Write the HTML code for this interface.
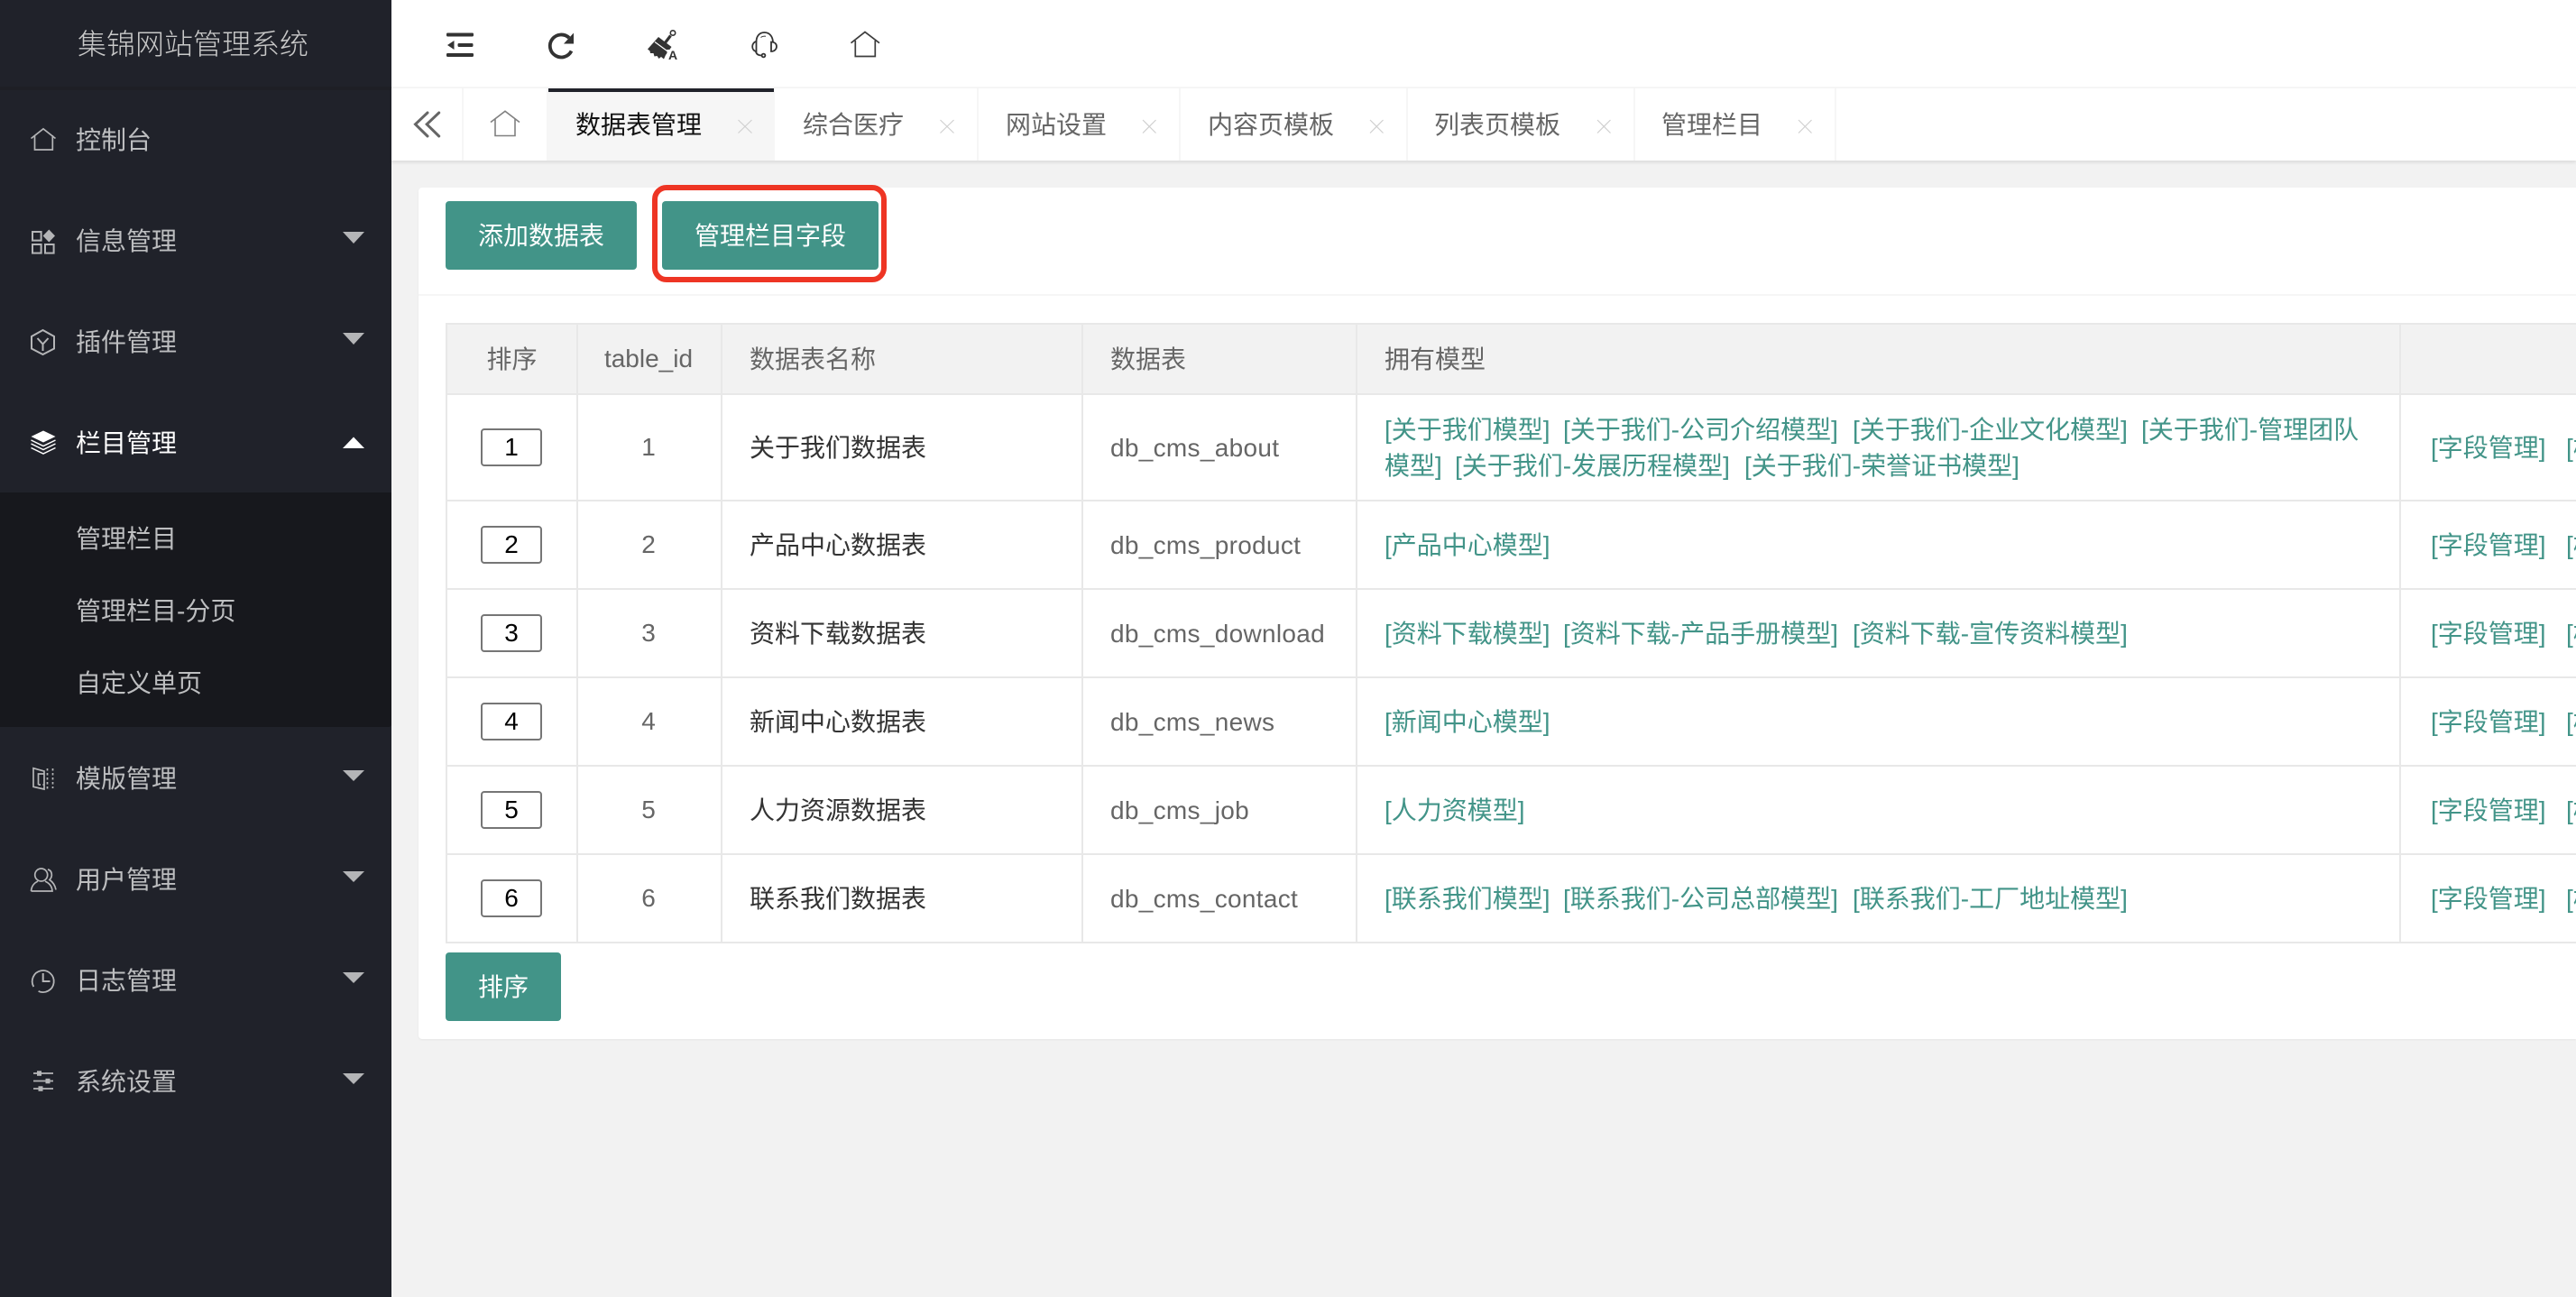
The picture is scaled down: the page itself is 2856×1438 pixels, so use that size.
<!DOCTYPE html>
<html lang="zh-CN">
<head>
<meta charset="utf-8">
<title>集锦网站管理系统</title>
<style>
html,body{margin:0;padding:0;width:2856px;height:1438px;overflow:hidden;background:#f2f2f2;}
body{position:relative;font-family:"Liberation Sans","Noto Sans CJK SC",sans-serif;font-size:28px;}
.b{position:absolute;}
.t{position:absolute;white-space:nowrap;line-height:40px;height:40px;}
.s{color:#bdbec0;left:84px;}
.n{color:#333;left:831px;}
.d{color:#666;left:1231px;letter-spacing:.3px;}
.h{color:#666;}
.c{color:#666;text-align:center;}
.g{color:#429488;}
.tab{color:#666;top:119px;}
.btn{position:absolute;background:#429488;color:#fff;border-radius:4px;height:76px;line-height:78px;text-align:center;}
.inp{position:absolute;left:533px;width:68px;height:42px;box-sizing:border-box;border:2px solid #767676;border-radius:4px;background:#fff;color:#000;text-align:center;line-height:38px;}
.lh{position:absolute;height:2px;background:#e8e8e8;left:494px;right:0;}
.lv{position:absolute;width:2px;background:#e8e8e8;top:358px;height:688px;}
svg{position:absolute;left:0;top:0;}
</style>
</head>
<body>
<!-- sidebar -->
<div class="b" style="left:0;top:0;width:434px;height:1438px;background:#20222a;"></div>
<div class="b" style="left:0;top:96px;width:434px;height:4px;background:#1e1f25;"></div>
<div class="b" style="left:0;top:546px;width:434px;height:260px;background:#17181d;border-radius:0 0 3px 0;"></div>
<div class="t" style="left:86px;top:29px;font-size:32px;font-weight:300;color:#c9c9c9;">集锦网站管理系统</div>
<div class="t s" style="top:136px;">控制台</div>
<div class="t s" style="top:248px;">信息管理</div>
<div class="t s" style="top:360px;">插件管理</div>
<div class="t s" style="top:472px;color:#fff;">栏目管理</div>
<div class="t s" style="top:578px;">管理栏目</div>
<div class="t s" style="top:658px;">管理栏目-分页</div>
<div class="t s" style="top:738px;">自定义单页</div>
<div class="t s" style="top:844px;">模版管理</div>
<div class="t s" style="top:956px;">用户管理</div>
<div class="t s" style="top:1068px;">日志管理</div>
<div class="t s" style="top:1180px;">系统设置</div>

<!-- header / tabs -->
<div class="b" style="left:434px;top:0;right:0;height:96px;background:#fff;"></div>
<div class="b" style="left:434px;top:96px;right:0;height:2px;background:#f6f6f6;"></div>
<div class="b" style="left:434px;top:98px;right:0;height:80px;background:#fff;box-shadow:0 2px 4px rgba(0,0,0,.1);"></div>
<div class="b" style="left:606px;top:98px;width:253px;height:80px;background:#f6f6f6;"></div>
<div class="b" style="left:608px;top:98px;width:250px;height:4px;background:#20222a;"></div>
<div class="b" style="left:512px;top:98px;width:2px;height:80px;background:#f6f6f6;"></div>
<div class="b" style="left:1083px;top:98px;width:2px;height:80px;background:#f6f6f6;"></div>
<div class="b" style="left:1307px;top:98px;width:2px;height:80px;background:#f6f6f6;"></div>
<div class="b" style="left:1559px;top:98px;width:2px;height:80px;background:#f6f6f6;"></div>
<div class="b" style="left:1811px;top:98px;width:2px;height:80px;background:#f6f6f6;"></div>
<div class="b" style="left:2034px;top:98px;width:2px;height:80px;background:#f6f6f6;"></div>
<div class="t tab" style="left:638px;color:#111;">数据表管理</div>
<div class="t tab" style="left:890px;">综合医疗</div>
<div class="t tab" style="left:1115px;">网站设置</div>
<div class="t tab" style="left:1339px;">内容页模板</div>
<div class="t tab" style="left:1590px;">列表页模板</div>
<div class="t tab" style="left:1842px;">管理栏目</div>

<!-- card -->
<div class="b" style="left:464px;top:208px;right:0;height:944px;background:#fff;border-radius:4px 0 0 4px;box-shadow:0 1px 2px rgba(0,0,0,.05);"></div>
<div class="b" style="left:464px;top:326px;right:0;height:2px;background:#f6f6f6;"></div>
<div class="btn" style="left:494px;top:223px;width:212px;">添加数据表</div>
<div class="btn" style="left:734px;top:223px;width:240px;">管理栏目字段</div>
<div class="b" style="left:723px;top:205px;width:260px;height:108px;box-sizing:border-box;border:6px solid #ee3524;border-radius:16px;"></div>

<!-- table -->
<div class="b" style="left:494px;top:358px;right:0;height:80px;background:#f2f2f2;"></div>
<div class="lh" style="top:358px;"></div>
<div class="lh" style="top:436px;"></div>
<div class="lh" style="top:554px;"></div>
<div class="lh" style="top:652px;"></div>
<div class="lh" style="top:750px;"></div>
<div class="lh" style="top:848px;"></div>
<div class="lh" style="top:946px;"></div>
<div class="lh" style="top:1044px;"></div>
<div class="lv" style="left:494px;"></div>
<div class="lv" style="left:639px;"></div>
<div class="lv" style="left:799px;"></div>
<div class="lv" style="left:1199px;"></div>
<div class="lv" style="left:1503px;"></div>
<div class="lv" style="left:2660px;"></div>

<div class="t c" style="left:496px;width:143px;top:379px;">排序</div>
<div class="t c" style="left:640px;width:158px;top:378px;">table_id</div>
<div class="t h" style="left:831px;top:379px;">数据表名称</div>
<div class="t h" style="left:1231px;top:379px;">数据表</div>
<div class="t h" style="left:1535px;top:379px;">拥有模型</div>

<div class="inp" style="top:475px;">1</div>
<div class="inp" style="top:583px;">2</div>
<div class="inp" style="top:681px;">3</div>
<div class="inp" style="top:779px;">4</div>
<div class="inp" style="top:877px;">5</div>
<div class="inp" style="top:975px;">6</div>

<div class="t c" style="left:640px;width:158px;top:476px;">1</div>
<div class="t c" style="left:640px;width:158px;top:584px;">2</div>
<div class="t c" style="left:640px;width:158px;top:682px;">3</div>
<div class="t c" style="left:640px;width:158px;top:780px;">4</div>
<div class="t c" style="left:640px;width:158px;top:878px;">5</div>
<div class="t c" style="left:640px;width:158px;top:976px;">6</div>

<div class="t n" style="top:477px;">关于我们数据表</div>
<div class="t n" style="top:585px;">产品中心数据表</div>
<div class="t n" style="top:683px;">资料下载数据表</div>
<div class="t n" style="top:781px;">新闻中心数据表</div>
<div class="t n" style="top:879px;">人力资源数据表</div>
<div class="t n" style="top:977px;">联系我们数据表</div>

<div class="t d" style="top:477px;">db_cms_about</div>
<div class="t d" style="top:585px;">db_cms_product</div>
<div class="t d" style="top:683px;">db_cms_download</div>
<div class="t d" style="top:781px;">db_cms_news</div>
<div class="t d" style="top:879px;">db_cms_job</div>
<div class="t d" style="top:977px;">db_cms_contact</div>

<div class="t g" style="left:1535px;top:457px;">[关于我们模型]</div>
<div class="t g" style="left:1733px;top:457px;">[关于我们-公司介绍模型]</div>
<div class="t g" style="left:2054px;top:457px;">[关于我们-企业文化模型]</div>
<div class="t g" style="left:2374px;top:457px;">[关于我们-管理团队</div>
<div class="t g" style="left:1535px;top:497px;">模型]</div>
<div class="t g" style="left:1613px;top:497px;">[关于我们-发展历程模型]</div>
<div class="t g" style="left:1934px;top:497px;">[关于我们-荣誉证书模型]</div>
<div class="t g" style="left:1535px;top:585px;">[产品中心模型]</div>
<div class="t g" style="left:1535px;top:683px;">[资料下载模型]</div>
<div class="t g" style="left:1733px;top:683px;">[资料下载-产品手册模型]</div>
<div class="t g" style="left:2054px;top:683px;">[资料下载-宣传资料模型]</div>
<div class="t g" style="left:1535px;top:781px;">[新闻中心模型]</div>
<div class="t g" style="left:1535px;top:879px;">[人力资模型]</div>
<div class="t g" style="left:1535px;top:977px;">[联系我们模型]</div>
<div class="t g" style="left:1733px;top:977px;">[联系我们-公司总部模型]</div>
<div class="t g" style="left:2054px;top:977px;">[联系我们-工厂地址模型]</div>

<div class="t g" style="left:2695px;top:477px;">[字段管理]</div><div class="t g" style="left:2845px;top:477px;">[模型管理]</div>
<div class="t g" style="left:2695px;top:585px;">[字段管理]</div><div class="t g" style="left:2845px;top:585px;">[模型管理]</div>
<div class="t g" style="left:2695px;top:683px;">[字段管理]</div><div class="t g" style="left:2845px;top:683px;">[模型管理]</div>
<div class="t g" style="left:2695px;top:781px;">[字段管理]</div><div class="t g" style="left:2845px;top:781px;">[模型管理]</div>
<div class="t g" style="left:2695px;top:879px;">[字段管理]</div><div class="t g" style="left:2845px;top:879px;">[模型管理]</div>
<div class="t g" style="left:2695px;top:977px;">[字段管理]</div><div class="t g" style="left:2845px;top:977px;">[模型管理]</div>

<div class="btn" style="left:494px;top:1056px;width:128px;">排序</div>

<!-- icons -->
<svg width="2856" height="1438" viewBox="0 0 2856 1438" fill="none">
  <!-- sidebar icons -->
  <g stroke="#b4b5b7" stroke-width="1.7" fill="none">
    <path d="M34.5 153.500L48 142.800L61.500 153.500M38.500 150V166H58.300V150"/>
    <rect x="36" y="257" width="9.6" height="9.6" stroke-width="2"/>
    <rect x="36" y="271" width="9.6" height="9.6" stroke-width="2"/>
    <rect x="50" y="271" width="9.6" height="9.6" stroke-width="2"/>
    <path d="M54.300 254.500L61 261.500L54.300 268.500L47.600 261.500Z" fill="#b4b5b7" stroke="none"/>
    <path d="M47.500 366L60 373V386.500L47.500 393L35 386.500V373Z" stroke-width="2"/>
    <path d="M41.500 375L47.500 381.500L53.500 375M47.500 381.500V389" stroke-width="2"/>
    <path d="M37 851.700L49 855V875L37 872.300ZM42.500 870V858H49"/>
    <path d="M42.500 870H49M52.500 852V875M58.500 852V874" stroke-dasharray="2.5 2.5"/>
    <circle cx="45.700" cy="970" r="7"/>
    <path d="M34.500 988C35 981 39 978.500 42 977M50 977C53 978.500 57.500 981 58 988H34.500"/>
    <path d="M53 964C57.500 965 59 971 55 975.500C58 977.500 61 981 62 986.500"/>
    <path d="M37.300 1094A12 12 0 1 1 42.600 1098.900" stroke-width="1.8"/>
    <path d="M47.700 1079V1088H55.500" stroke-width="2"/>
    <path d="M37 1190H59M37 1198.500H59M37 1207H59"/>
  </g>
  <g fill="#b4b5b7">
    <rect x="41" y="1187.300" width="5" height="5.5"/>
    <rect x="50.500" y="1195.800" width="5" height="5.5"/>
    <rect x="42.500" y="1204.300" width="5" height="5.5"/>
    <path d="M380 257H404L392 270Z"/>
    <path d="M380 369H404L392 382Z"/>
    <path d="M380 854H404L392 866Z"/>
    <path d="M380 966H404L392 978Z"/>
    <path d="M380 1078H404L392 1090Z"/>
    <path d="M380 1190H404L392 1202Z"/>
  </g>
  <path d="M380 497H404L392 484.500Z" fill="#fff"/>
  <path d="M48 477.500L61.500 484L48 490.500L34.500 484Z" fill="#fff"/>
  <path d="M34.500 488L48 494.500L61.500 488M34.500 492L48 498.500L61.500 492M34.500 496.500L48 503L61.500 496.500" stroke="#fff" stroke-width="1.5"/>

  <!-- top toolbar -->
  <g fill="#333">
    <rect x="495" y="36.500" width="30" height="4" rx="1.2"/>
    <rect x="495" y="59" width="30" height="4" rx="1.2"/>
    <rect x="507.500" y="48" width="17" height="4" rx="1.2"/>
    <path d="M496 50L503.500 45V55Z"/>
  </g>
  <path d="M633.500 56.500A12.500 12.500 0 1 1 631 42" stroke="#333" stroke-width="3.8"/>
  <path d="M636 36.500V48.500H625Z" fill="#333"/>
  <!-- brush -->
  <path d="M730 41L744.500 52L738 61L736 65.500L733 63L730.500 65L728.500 62L725.500 62.500L724.500 59L721 59L720.500 56.500L718 54.500Z" fill="#333"/>
  <path d="M726 46.500L741 57.500" stroke="#fff" stroke-width="1.2"/>
  <path d="M737 48L743.500 39.500" stroke="#333" stroke-width="3.2"/>
  <circle cx="746" cy="36.500" r="2.7" stroke="#333" stroke-width="1.6"/>
  <rect x="739.500" y="55" width="14" height="13" fill="#fff"/>
  <text x="741" y="66.200" font-family="Liberation Sans" font-size="14" font-weight="700" fill="#333">A</text>
  <!-- headset -->
  <g stroke="#333" stroke-width="1.8" fill="none">
    <path d="M838.500 46.500C838.500 40 842 36 847.500 36S856.500 40 857 46.500"/>
    <path d="M838.500 46C833 47 832.500 56 838.500 57Z"/>
    <path d="M855 46.500V57C862.500 57 863.500 46.500 855 46.500Z"/>
    <path d="M838 57C838.500 60 840.500 61.500 844.500 61.500"/>
    <circle cx="846.500" cy="61.500" r="1.9"/>
    <path d="M843.500 41.500C845 40.300 847 40 849 40.300" stroke-width="1"/>
  </g>
  <!-- home -->
  <path d="M943.500 47.700L959 35.500L975 47.700M948.300 45V62.500H970.300V45" stroke="#3c3c3c" stroke-width="1.7"/>

  <!-- tab bar -->
  <path d="M474 125L460.500 137.800L474 151M486.700 125L473.200 137.800L486.700 151" stroke="#666" stroke-width="3" stroke-linecap="round"/>
  <path d="M544 135.500L560 123.300L576 135.500M549 132V150.500H571V132" stroke="#808080" stroke-width="1.6"/>
  <g stroke="#d0d0d0" stroke-width="1.2">
    <path d="M818.500 133L833.500 147.500M833.500 133L818.500 147.500"/>
    <path d="M1042.500 133L1057.500 147.500M1057.500 133L1042.500 147.500"/>
    <path d="M1267 133L1281.500 147.500M1281.500 133L1267 147.500"/>
    <path d="M1519 133L1533.500 147.500M1533.500 133L1519 147.500"/>
    <path d="M1771 133L1785.500 147.500M1785.500 133L1771 147.500"/>
    <path d="M1994 133L2008.500 147.500M2008.500 133L1994 147.500"/>
  </g>
</svg>
</body>
</html>
